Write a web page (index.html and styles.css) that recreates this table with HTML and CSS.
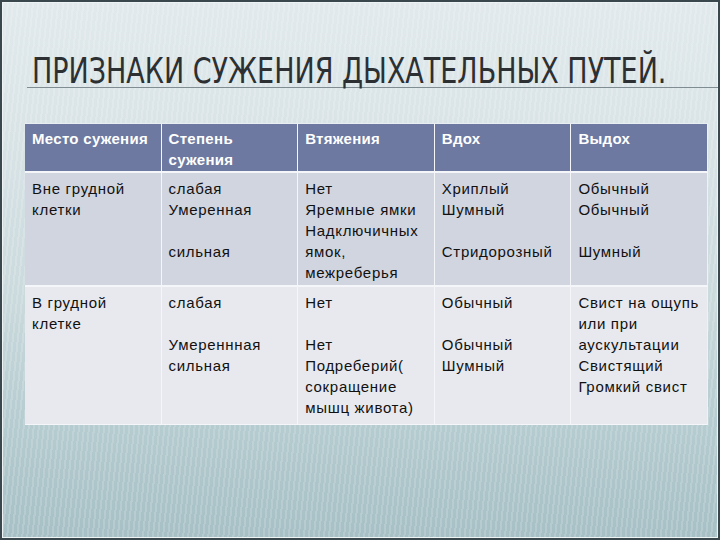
FILE: index.html
```html
<!DOCTYPE html>
<html lang="ru">
<head>
<meta charset="utf-8">
<title>Признаки сужения дыхательных путей</title>
<link rel="stylesheet" href="styles.css">
</head>
<body>
<div class="slide">
  <h1 class="title"><span class="title-text">ПРИЗНАКИ СУЖЕНИЯ ДЫХАТЕЛЬНЫХ ПУТЕЙ.</span></h1>
  <table class="grid">
    <tr class="head">
      <td>Место сужения</td>
      <td>Степень<br>сужения</td>
      <td>Втяжения</td>
      <td>Вдох</td>
      <td>Выдох</td>
    </tr>
    <tr class="row1">
      <td>Вне грудной<br>клетки</td>
      <td>слабая<br>Умеренная<br><br>сильная</td>
      <td>Нет<br>Яремные ямки<br>Надключичных<br>ямок,<br>межреберья</td>
      <td>Хриплый<br>Шумный<br><br>Стридорозный</td>
      <td>Обычный<br>Обычный<br><br>Шумный</td>
    </tr>
    <tr class="row2">
      <td>В грудной<br>клетке</td>
      <td>слабая<br><br>Умереннная<br>сильная</td>
      <td>Нет<br><br>Нет<br>Подреберий(<br>сокращение<br>мышц живота)</td>
      <td>Обычный<br><br>Обычный<br>Шумный</td>
      <td>Свист на ощупь<br>или при<br>аускультации<br>Свистящий<br>Громкий свист</td>
    </tr>
  </table>
</div>
</body>
</html>
```
FILE: styles.css
```css
html, body {
  margin: 0;
  padding: 0;
}
body {
  width: 720px;
  height: 540px;
  overflow: hidden;
}
.slide {
  box-sizing: border-box;
  width: 720px;
  height: 540px;
  border: 2px solid #3a474d;
  box-shadow: inset 0 0 0 1px #eef3f5;
  background:
    repeating-linear-gradient(96deg, rgba(255,255,255,0.16) 0 2px, rgba(255,255,255,0) 2px 5px),
    linear-gradient(180deg, #e1e9ec 0%, #dbe5e8 20%, #cbdadd 55%, #b4cbcf 80%, #a6c0c5 100%);
  display: flex;
  flex-direction: column;
  font-family: "Liberation Sans", Arial, sans-serif;
}
.title {
  margin: 57px 0 0 25px;
  padding: 0 0 0 5px;
  font-family: "DejaVu Sans Condensed", "DejaVu Sans", sans-serif;
  font-weight: normal;
  font-size: 30px;
  line-height: 28px;
  color: #2c3033;
  border-bottom: 1px solid #7f8c92;
  white-space: nowrap;
}
.title-text {
  display: inline-block;
  transform: scaleY(1.2);
  transform-origin: 0 24.4px;
}
.grid {
  margin: 35px 0 0 23px;
  width: 683px;
  table-layout: fixed;
  border-collapse: separate;
  border-spacing: 0;
  border-top: 1px solid #e9eef2;
}
.grid td {
  vertical-align: top;
  padding: 5px 4px 0 7px;
  font-size: 15px;
  line-height: 21px;
  letter-spacing: 0.7px;
  color: #111;
  border-right: 1px solid #f4f6f9;
  border-bottom: 2px solid #f4f6f9;
}
.grid td:last-child {
  border-right: 1px solid #eef2f5;
}
.head td {
  background: #6d79a0;
  color: #fff;
  font-weight: bold;
  letter-spacing: 0.3px;
  height: 43px;
  padding-top: 4px;
}
.row1 td {
  background: #d1d5e0;
  height: 107px;
}
.row2 td {
  background: #e8e9ef;
  height: 132px;
  border-bottom: 1px solid #f4f6f9;
}
```
